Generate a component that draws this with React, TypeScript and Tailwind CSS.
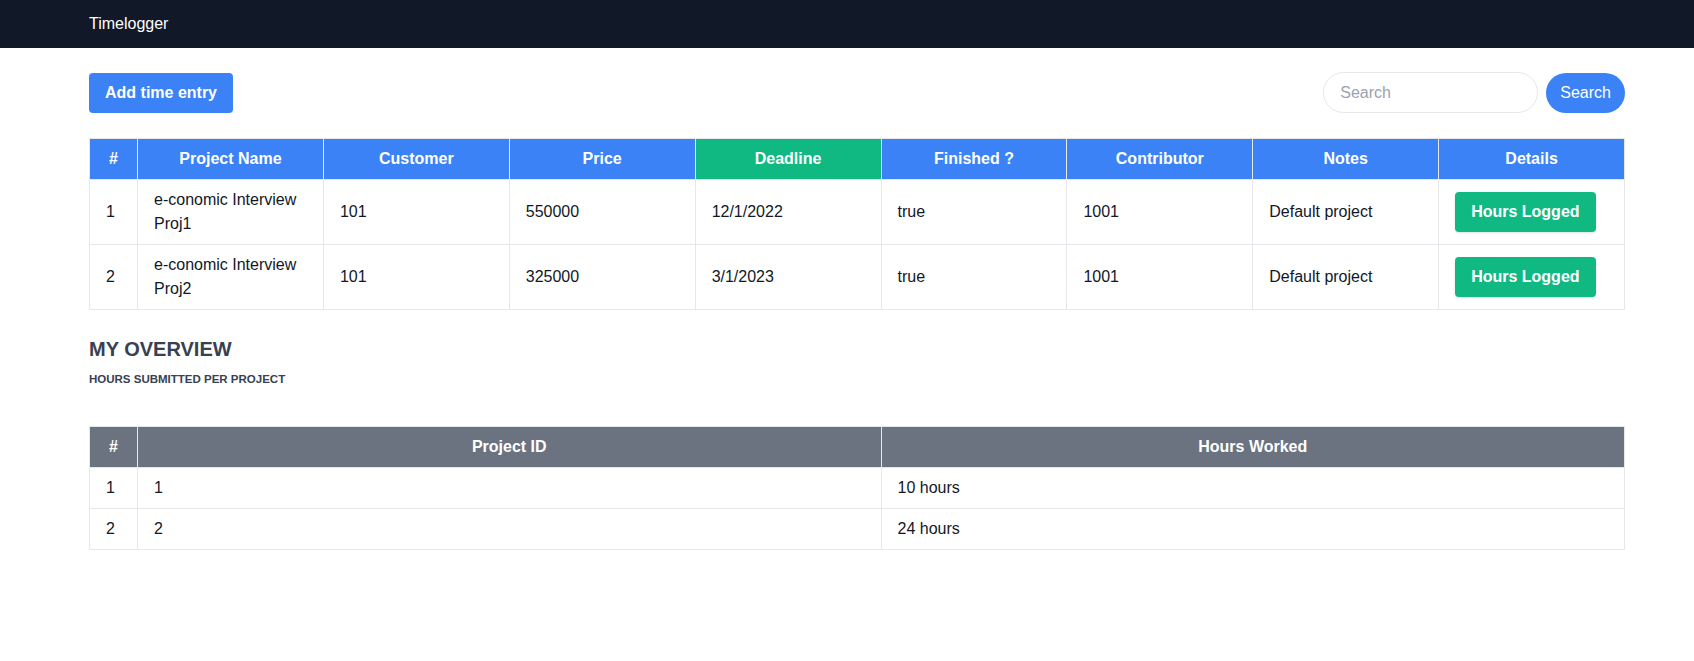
const projects = [
  { id: 1, name: "e-conomic Interview Proj1", customer: 101, price: 550000, deadline: "12/1/2022", finished: true, contributor: 1001, notes: "Default project" },
  { id: 2, name: "e-conomic Interview Proj2", customer: 101, price: 325000, deadline: "3/1/2023", finished: true, contributor: 1001, notes: "Default project" },
];

const overview = [
  { projectId: 1, hours: 10 },
  { projectId: 2, hours: 24 },
];

const headers = ["Project Name", "Customer", "Price", "Deadline", "Finished ?", "Contributor", "Notes", "Details"];

export default function App() {
  return (
    <div className="min-h-screen bg-white font-['Liberation_Sans',Arial,sans-serif] text-base text-[#111827]">
      <nav className="flex h-12 items-center bg-[#111827]">
        <span className="ml-[89px] text-white">Timelogger</span>
      </nav>

      <main className="ml-[89px] w-[1536px] pt-6">
        <div className="flex items-center justify-between">
          <button className="rounded bg-[#3b82f6] px-4 py-2 font-bold text-white">Add time entry</button>
          <div className="flex items-center gap-2">
            <input
              type="text"
              placeholder="Search"
              className="h-[41px] w-[215px] rounded-full border border-[#e5e7eb] px-4 text-[#111827] outline-none placeholder:text-[#9ca3af]"
            />
            <button className="h-10 rounded-full bg-[#3b82f6] px-[14px] text-white">Search</button>
          </div>
        </div>

        <table className="mt-[25px] w-full table-fixed border-collapse">
          <colgroup>
            <col className="w-12" />
            {headers.map((h) => (
              <col key={h} />
            ))}
          </colgroup>
          <thead>
            <tr>
              <th className="border border-[#e5e7eb] bg-[#3b82f6] px-2 py-2 font-bold text-white">#</th>
              {headers.map((h) => (
                <th
                  key={h}
                  className={`border border-[#e5e7eb] px-4 py-2 font-bold text-white ${h === "Deadline" ? "bg-[#10b981]" : "bg-[#3b82f6]"}`}
                >
                  {h}
                </th>
              ))}
            </tr>
          </thead>
          <tbody>
            {projects.map((p) => (
              <tr key={p.id}>
                <td className="border border-[#e5e7eb] px-4 py-2">{p.id}</td>
                <td className="border border-[#e5e7eb] px-4 py-2">{p.name}</td>
                <td className="border border-[#e5e7eb] px-4 py-2">{p.customer}</td>
                <td className="border border-[#e5e7eb] px-4 py-2">{p.price}</td>
                <td className="border border-[#e5e7eb] px-4 py-2">{p.deadline}</td>
                <td className="border border-[#e5e7eb] px-4 py-2">{String(p.finished)}</td>
                <td className="border border-[#e5e7eb] px-4 py-2">{p.contributor}</td>
                <td className="border border-[#e5e7eb] px-4 py-2">{p.notes}</td>
                <td className="border border-[#e5e7eb] px-4 py-2">
                  <button className="rounded bg-[#10b981] px-4 py-2 font-bold text-white shadow-sm">Hours Logged</button>
                </td>
              </tr>
            ))}
          </tbody>
        </table>

        <h2 className="mt-[25px] text-xl font-bold text-[#374151]">MY OVERVIEW</h2>
        <p className="mt-2 text-[11.5px] leading-4 font-bold text-[#374151]">HOURS SUBMITTED PER PROJECT</p>

        <table className="mt-[39px] w-full table-fixed border-collapse">
          <colgroup>
            <col className="w-12" />
            <col />
            <col />
          </colgroup>
          <thead>
            <tr>
              <th className="border border-[#e5e7eb] bg-[#6b7280] px-2 py-2 font-bold text-white">#</th>
              <th className="border border-[#e5e7eb] bg-[#6b7280] px-4 py-2 font-bold text-white">Project ID</th>
              <th className="border border-[#e5e7eb] bg-[#6b7280] px-4 py-2 font-bold text-white">Hours Worked</th>
            </tr>
          </thead>
          <tbody>
            {overview.map((o, i) => (
              <tr key={o.projectId}>
                <td className="border border-[#e5e7eb] px-4 py-2">{i + 1}</td>
                <td className="border border-[#e5e7eb] px-4 py-2">{o.projectId}</td>
                <td className="border border-[#e5e7eb] px-4 py-2">{o.hours} hours</td>
              </tr>
            ))}
          </tbody>
        </table>
      </main>
    </div>
  );
}
